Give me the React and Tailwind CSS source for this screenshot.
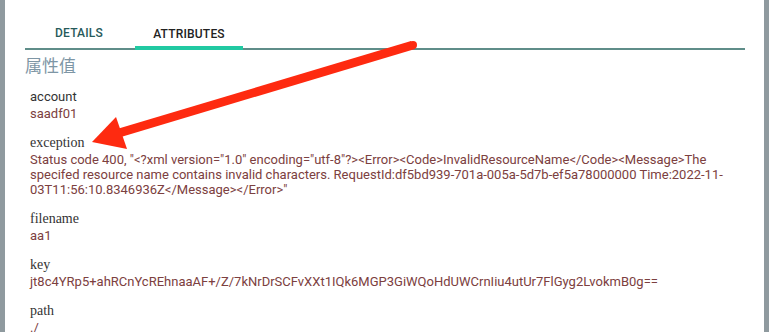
import React from "react";

const ATTRS = [
  { key: "account", value: "saadf01", sans: true },
  {
    key: "exception",
    value:
      'Status code 400, "<?xml version="1.0" encoding="utf-8"?><Error><Code>InvalidResourceName</Code><Message>The specifed resource name contains invalid characters. RequestId:df5bd939-701a-005a-5d7b-ef5a78000000 Time:2022-11-03T11:56:10.8346936Z</Message></Error>"',
  },
  { key: "filename", value: "aa1" },
  {
    key: "key",
    value: "jt8c4YRp5+ahRCnYcREhnaaAF+/Z/7kNrDrSCFvXXt1IQk6MGP3GiWQoHdUWCrnIiu4utUr7FlGyg2LvokmB0g==",
  },
  { key: "path", value: "./" },
];

function Arrow() {
  // red annotation arrow drawn over the panel
  return (
    <svg className="absolute left-0 top-0 pointer-events-none" width="769" height="332" viewBox="0 0 769 332">
      <polygon points="411,41 415,49 121,137 117,129" fill="#fe2a10" />
      <circle cx="413" cy="45" r="4" fill="#fe2a10" />
      <polygon points="92,142 116,117 127,149" fill="#fe2a10" />
    </svg>
  );
}

export default function App() {
  return (
    <div className="relative flex h-[332px] w-[769px] overflow-hidden bg-white font-['Roboto',sans-serif]">
      <div className="w-[5px] shrink-0 bg-[#8f9a9f]" />
      <div className="flex-1 pl-[20px] pr-[19px] pt-[16px]">
        <div className="flex border-b-2 border-[#5f8d89]">
          <div className="flex h-[32px] w-[108px] items-center justify-center pt-[2px] text-[12px] font-medium tracking-[0.2px] text-[#275a5a]">
            DETAILS
          </div>
          <div className="ml-[2px] -mb-[2px] flex h-[34px] w-[108px] items-center justify-center border-b-[4px] border-[#21c9a2] pt-[5px] text-[12px] font-medium tracking-[0.2px] text-[#222]">
            ATTRIBUTES
          </div>
        </div>
        <div className="mt-[5px] text-[17px] leading-[20px] text-[#7e96a5] font-['Noto_Sans_CJK_SC',sans-serif]">
          属性值
        </div>
        <div className="mt-[12px] flex flex-col gap-[12px] pl-[5px]">
          {ATTRS.map((a) => (
            <div key={a.key} className="text-[13px]">
              <div
                className={
                  a.sans
                    ? "leading-[19px] text-[#333] font-['Roboto',sans-serif]"
                    : "text-[14px] leading-[19px] text-[#333] font-['Liberation_Serif',serif]"
                }
              >
                {a.key}
              </div>
              <div className="break-words leading-[15px] text-[#7c4040]">{a.value}</div>
            </div>
          ))}
        </div>
      </div>
      <div className="w-[5px] shrink-0 bg-[#8f9a9f]" />
      <Arrow />
    </div>
  );
}
